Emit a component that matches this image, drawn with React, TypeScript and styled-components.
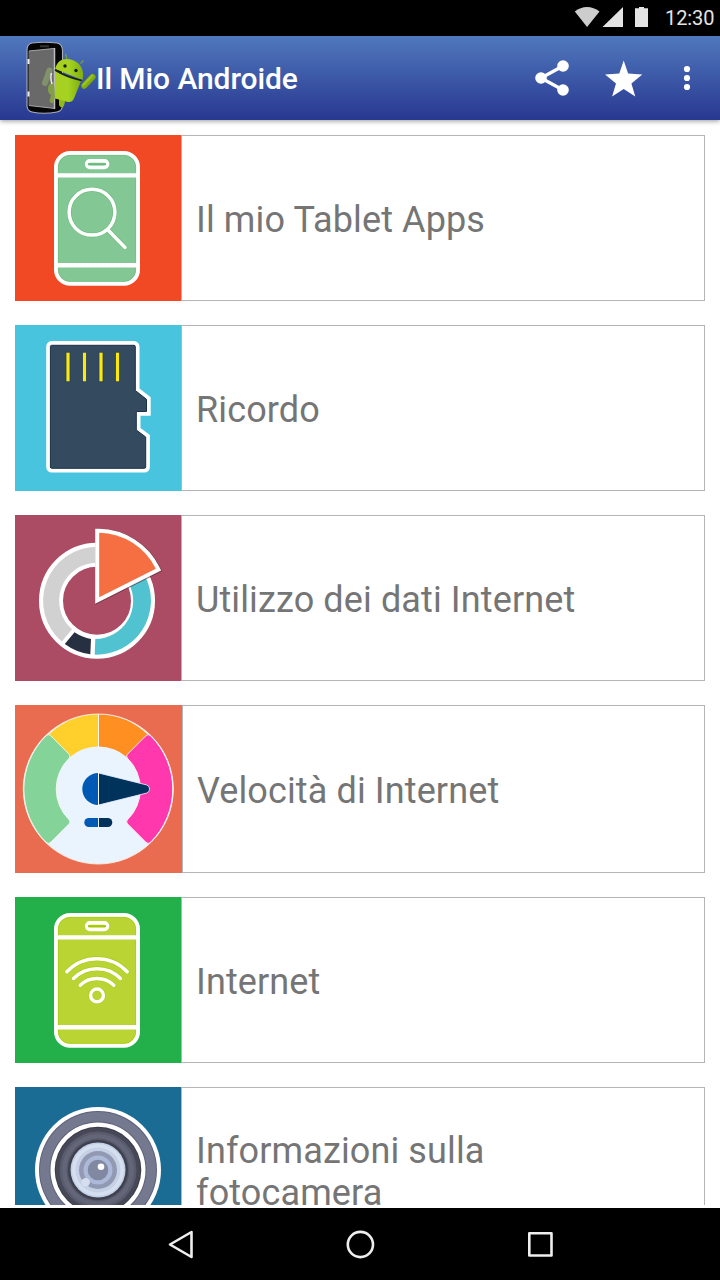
import React from "react";
import styled, { createGlobalStyle } from "styled-components";

const GlobalStyle = createGlobalStyle`
  html, body { margin: 0; padding: 0; background: #fff; }
  body { font-family: Roboto, "Liberation Sans", sans-serif; overflow: hidden; }
  * { box-sizing: border-box; }
  svg { display: block; flex: none; }
`;

const Screen = styled.div`
  width: 720px;
  height: 1280px;
  display: flex;
  flex-direction: column;
  background: #fff;
  overflow: hidden;
`;

const StatusBar = styled.div`
  height: 36px;
  flex: none;
  background: #000;
  display: flex;
  align-items: center;
  justify-content: flex-end;
  padding-right: 6px;
`;

const Clock = styled.span`
  width: 49px;
  margin-left: 16px;
  color: #e4e4e4;
  font-size: 20px;
  line-height: 36px;
  font-weight: 400;
  letter-spacing: -0.1px;
  white-space: nowrap;
`;

const AppBar = styled.header`
  height: 84px;
  flex: none;
  display: flex;
  align-items: center;
  padding-left: 24px;
  padding-right: 20px;
  background: linear-gradient(#5078bd, #283890);
  box-shadow: 0 1px 5px rgba(0, 0, 0, 0.42);
  z-index: 1;
`;

const AppTitle = styled.h1`
  margin: 0;
  flex: 1;
  color: #fff;
  font-size: 30px;
  line-height: 36px;
  font-weight: 500;
  letter-spacing: -0.08px;
  padding-top: 2px;
`;

const Actions = styled.div`
  display: flex;
  align-items: center;
  gap: 28px;
`;

const List = styled.main`
  height: 1085px;
  flex: none;
  overflow: hidden;
  padding: 15px 15px 0;
  display: flex;
  flex-direction: column;
  gap: 24px;
`;

const Card = styled.div<{ $height: number }>`
  height: ${(p) => p.$height}px;
  flex: none;
  display: flex;
`;

const Label = styled.div`
  flex: 1;
  display: flex;
  align-items: center;
  border: 1px solid #b5b5b5;
  padding: 3px 60px 0 14px;
  color: #757575;
  font-size: 36px;
  line-height: 42px;
  letter-spacing: 0.12px;
`;

const NavBar = styled.nav`
  height: 72px;
  flex: none;
  margin-top: 3px;
  background: #000;
  display: flex;
  align-items: center;
  justify-content: center;
  gap: 148px;
`;

function StatusIcons() {
  return (
    <svg width="76" height="36" viewBox="0 0 76 36">
      <path d="M1.800 11.600C9 5.600 19 5.600 26.500 11.600L14.100 27Z" fill="#cdcdcd" />
      <path d="M50 7V27H29.500Z" fill="#e4e4e4" />
      <path d="M62 8.200H66V7H71V8.200H75V27H62Z" fill="#e4e4e4" />
    </svg>
  );
}

function Logo() {
  return (
    <svg width="72" height="84" viewBox="0 0 72 84">
      <defs>
        <linearGradient id="robot" x1="0" x2="1">
          <stop offset="0" stopColor="#a8cf22" />
          <stop offset="0.5" stopColor="#a5d321" />
          <stop offset="1" stopColor="#7fae10" />
        </linearGradient>
      </defs>
      <path d="M8 7Q20 5.500 33 7Q38 8 38.500 14V70Q38 75 33 76Q20 78.500 8 76Q3.300 75 3 70V14Q3 8 8 7Z" fill="#050505" stroke="#aaaebc" strokeWidth="1.100" />
      <path d="M16 10.300H25" stroke="#343434" strokeWidth="2" />
      <path d="M4.500 15L31 12.200V72.500L4.500 69.500Z" fill="#696969" />
      <path d="M5 15L31 12.400M31 72.500L5 69.500" fill="none" stroke="#a5a5a5" strokeWidth="1" />
      <path d="M30.500 12V73" stroke="#bdbdbd" strokeWidth="1.500" />
      <path d="M4.500 23V28M4.500 55.500V60.500" stroke="#eee" strokeWidth="2" />
      <path d="M25.500 34.500L21 47" stroke="#81926a" strokeWidth="6" strokeLinecap="round" />
      <path d="M30 46Q23 47 24 55Q25 58 27 59L25.500 65Q27 68 29 67L31 61Z" fill="#839e49" />
      <path d="M27.500 37Q26 42 28 48" fill="none" stroke="#eee" strokeWidth="1.500" />
      <path d="M35 61V69Q36 71.800 38.500 71.300Q40.500 70.500 41 65Z" fill="#8fba17" />
      <path d="M31 34.500L57 45L50 62.500Q48 67 43 65.800L31 62.500Z" fill="url(#robot)" />
      <path d="M31.200 33C33 23.500 41 21.500 48.500 24C56 26.500 61 34 58.500 44Z" fill="url(#robot)" />
      <path d="M31 34C38 38.500 47 42 57.500 44.500" fill="none" stroke="#19220c" strokeWidth="1.500" />
      <path d="M43 23L41.500 18M56.500 27.500L59.500 24.500" stroke="#7fa52a" strokeWidth="1.200" />
      <circle cx="41" cy="30" r="1.700" fill="#17200c" />
      <circle cx="52" cy="34.500" r="1.700" fill="#17200c" />
      <path d="M60.200 49.800L68.500 41" stroke="#7fae0c" strokeWidth="6" strokeLinecap="round" />
      <path d="M59.500 48.800L68 40" stroke="#9bc41c" strokeWidth="2.500" strokeLinecap="round" />
    </svg>
  );
}

const ShareIcon = () => (
  <svg width="36" height="40" viewBox="0 0 36 40" fill="#fff">
    <path d="M29 8L7 20L29 32" fill="none" stroke="#fff" strokeWidth="3.300" />
    <circle cx="29" cy="8" r="5.800" />
    <circle cx="7" cy="20" r="5.800" />
    <circle cx="29" cy="32" r="5.800" />
  </svg>
);

const StarIcon = () => (
  <svg width="48" height="48" viewBox="-1.700 0 48 48" fill="#fff">
    <path d="M24 6.500L28.400 19.500L42.600 20.500L31.700 29.500L35.600 42.500L24 34.900L12.400 42.500L16.300 29.500L5.400 20.500L19.600 19.500Z" />
  </svg>
);

const MoreIcon = () => (
  <svg width="26" height="36" viewBox="0 0 26 36" fill="#fff">
    <circle cx="13" cy="9" r="3.100" />
    <circle cx="13" cy="18" r="3.100" />
    <circle cx="13" cy="27" r="3.100" />
  </svg>
);

function PhoneBody({ fill, edge }: { fill: string; edge: string }) {
  return (
    <g fill="none" stroke="#fff">
      <rect x="41" y="18" width="82" height="130.7" rx="14" fill={fill} strokeWidth="4" />
      <rect x="43.300" y="20.300" width="77.400" height="126.100" rx="12" stroke={edge} strokeWidth=".6" />
      <path d="M41 40.400H123M41 130.200H123" strokeWidth="4.400" />
      <rect x="71.700" y="25.900" width="20.800" height="6.400" rx="3.200" strokeWidth="3.700" />
      <path d="M73 29.200H91" stroke={edge} strokeWidth="2" />
    </g>
  );
}

const AppsTile = () => (
  <svg width="166" height="166" viewBox="0 0 166 166">
    <path fill="#f14924" d="M0 0H166V166H0Z" />
    <PhoneBody fill="#83c795" edge="#6cba7c" />
    <g fill="none" strokeLinecap="round">
      <circle cx="77" cy="77.200" r="22.900" stroke="#6fbd7d" strokeWidth="4.800" />
      <path d="M93 95L110 112.500" stroke="#6fbd7d" strokeWidth="4.800" />
      <circle cx="77" cy="77.200" r="22.900" stroke="#fff" strokeWidth="3.500" />
      <path d="M93 95L110 112.500" stroke="#fff" strokeWidth="3.500" />
    </g>
  </svg>
);

const CARD_SHAPE =
  "M36.700 20.300H119Q120.300 20.300 120.300 21.600V65.500L131.500 74.300V86.500H121.300V105L130.700 112V142Q130.700 143.300 129.400 143.300H36.700Q35.400 143.300 35.400 142V21.600Q35.400 20.300 36.700 20.300Z";

const MemoryTile = () => (
  <svg width="166" height="166" viewBox="0 0 166 166">
    <path fill="#48c4df" d="M0 0H166V166H0Z" />
    <path d={CARD_SHAPE} fill="#fff" stroke="#fff" strokeWidth="8.400" />
    <path d={CARD_SHAPE} fill="#344b5f" stroke="#1b3049" strokeWidth="1" />
    {[51, 67.5, 84, 100.5].map((x) => (
      <rect key={x} x={x} y="27.200" width="4" height="29.600" fill="#fde80c" stroke="#243f66" strokeWidth=".8" />
    ))}
  </svg>
);

const WEDGE = "M84.200 17.800A64.500 64.500 0 0 1 140.800 53.800L84.200 82.200Z";

const DataTile = () => (
  <svg width="166" height="166" viewBox="0 0 166 166">
    <path fill="#ab4c64" d="M0 0H166V166H0Z" />
    <circle cx="82" cy="85.700" r="46" fill="none" stroke="#fff" strokeWidth="24" />
    <path d="M82 31.700A54 54 0 0 0 46.800 126.600L57 114.200A38 38 0 0 1 82 47.700Z" fill="#d1d1d1" />
    <path d="M49.800 129A54 54 0 0 0 75.300 139.300L76 124Q67.500 122.500 59.500 117.200Z" fill="#263040" />
    <path d="M79.700 139.600A54 54 0 0 0 130.200 61.400L114 68.700A38 38 0 0 1 80.300 124Z" fill="#51c3d0" />
    <path d={WEDGE} fill="none" stroke="#53313a" strokeWidth="8.700" strokeOpacity=".65" transform="translate(.5 .4)" />
    <path d={WEDGE} fill="#f66f42" stroke="#fff" strokeWidth="8" />
    <path d={WEDGE} fill="#f66f42" />
  </svg>
);

const SpeedTile = () => (
  <svg width="167" height="168" viewBox="0 0 167 168">
    <path fill="#ea6c50" d="M0 0H167V168H0Z" />
    <circle cx="83.300" cy="84" r="75" fill="#eaf4ff" />
    <path d="M34 29.500A74.500 74.500 0 0 1 83.300 9V41.500A42 42 0 0 0 55 52Z" fill="#ffcf2b" />
    <path d="M132.600 29.500A74.500 74.500 0 0 0 83.300 9V41.500A42 42 0 0 1 111.600 52Z" fill="#ff8f20" />
    <path
      d="M31 30.800Q33.400 28.300 35.800 30.800L54 49.100Q56 51 54.200 53.200A43 43 0 0 0 54.200 114.800Q56 117 54 118.900L35.800 137.200Q33.400 139.700 31 137.200A75 75 0 0 1 31 30.800Z"
      fill="#84d399" stroke="#f5f8ef" strokeWidth=".9"
    />
    <path
      d="M135.600 30.800Q133.200 28.300 130.800 30.800L112.600 49.100Q110.600 51 112.400 53.200A43 43 0 0 1 112.400 114.800Q110.600 117 112.600 118.900L130.800 137.200Q133.200 139.700 135.600 137.200A75 75 0 0 0 135.600 30.800Z"
      fill="#ff38ae" stroke="#f5f8ef" strokeWidth=".9"
    />
    <circle cx="83.300" cy="84" r="75" fill="none" stroke="#fdeee5" strokeWidth=".9" />
    <path d="M83.500 68L131.500 79.900Q134.600 81 134.600 84Q134.600 87 131.500 88.100L83.500 100Z" fill="#00335c" stroke="#eaf4ff" strokeWidth=".8" />
    <path d="M83.300 68A16 16 0 0 0 83.300 100Z" fill="#005ab3" />
    <path d="M83.300 113H73.800A4.500 4.500 0 0 0 73.800 122H83.300Z" fill="#005ab3" />
    <path d="M83.300 113H92.800A4.500 4.500 0 0 1 92.800 122H83.300Z" fill="#00335c" />
    <path d="M83.500 9V42M83.500 67V101M83.500 112V123" stroke="#fff" strokeWidth=".9" />
  </svg>
);

const WifiTile = () => (
  <svg width="166" height="166" viewBox="0 0 166 166">
    <path fill="#23b04b" d="M0 0H166V166H0Z" />
    <PhoneBody fill="#b9d433" edge="#a5c800" />
    {[{ c: "#a9cc12", w: 4.6 }, { c: "#fff", w: 3.5 }].map(({ c, w }) => (
      <g key={c} fill="none" stroke={c} strokeWidth={w} strokeLinecap="round">
        <path d="M51.800 74.800A41.200 41.200 0 0 1 112.200 74.800M58.500 81.500A33 33 0 0 1 105.500 81.500M65.200 88.300A24 24 0 0 1 98.800 88.300" />
        <circle cx="82" cy="98.400" r="6.400" />
      </g>
    ))}
  </svg>
);

const LENS_RINGS: [number, string][] = [
  [63, "#fff"],
  [59, "#5d6078"],
  [58, "#757990"],
  [48.5, "#5d6078"],
  [47.5, "#fff"],
  [43.3, "#3b3c4a"],
  [42.3, "#464857"],
  [38.5, "#5a5c6d"],
  [36, "#636578"],
  [31.5, "#565869"],
  [30, "#3e404e"],
  [27.5, "#c2d0e7"],
  [26, "#d5dfef"],
  [22.5, "#c6d1e6"],
  [19, "#9199b3"],
  [14.5, "#adb9d8"],
  [10.3, "#8188a1"],
];

const CameraTile = () => (
  <svg width="166" height="166" viewBox="0 0 166 166">
    <path fill="#1b6c95" d="M0 0H166V166H0Z" />
    {LENS_RINGS.map(([r, fill]) => (
      <circle key={r} cx="83" cy="83" r={r} fill={fill} />
    ))}
    <circle cx="86" cy="79.700" r="3.300" fill="#fff" />
    <circle cx="70.700" cy="95.300" r="4.200" fill="#d5deee" />
  </svg>
);

const ITEMS = [
  { label: "Il mio Tablet Apps", height: 166, Tile: AppsTile },
  { label: "Ricordo", height: 166, Tile: MemoryTile },
  { label: "Utilizzo dei dati Internet", height: 166, Tile: DataTile },
  { label: "Velocità di Internet", height: 168, Tile: SpeedTile },
  { label: "Internet", height: 166, Tile: WifiTile },
  { label: "Informazioni sulla fotocamera", height: 166, Tile: CameraTile },
];

export default function App() {
  return (
    <Screen>
      <GlobalStyle />
      <StatusBar>
        <StatusIcons />
        <Clock>12:30</Clock>
      </StatusBar>
      <AppBar>
        <Logo />
        <AppTitle>Il Mio Androide</AppTitle>
        <Actions>
          <ShareIcon />
          <StarIcon />
          <MoreIcon />
        </Actions>
      </AppBar>
      <List>
        {ITEMS.map(({ label, height, Tile }) => (
          <Card key={label} $height={height}>
            <Tile />
            <Label>{label}</Label>
          </Card>
        ))}
      </List>
      <NavBar>
        <svg width="32" height="32" viewBox="0 0 32 32" fill="none" stroke="#eee" strokeWidth="2.600" strokeLinejoin="round">
          <path d="M6 16.500L27.500 4V29Z" />
        </svg>
        <svg width="32" height="32" viewBox="0 0 32 32" fill="none" stroke="#eee" strokeWidth="2.600">
          <circle cx="16.400" cy="16.500" r="12.600" />
        </svg>
        <svg width="32" height="32" viewBox="0 0 32 32" fill="none" stroke="#eee" strokeWidth="2.600" strokeLinejoin="round">
          <rect x="5.300" y="5.300" width="22.200" height="22.200" />
        </svg>
      </NavBar>
    </Screen>
  );
}
